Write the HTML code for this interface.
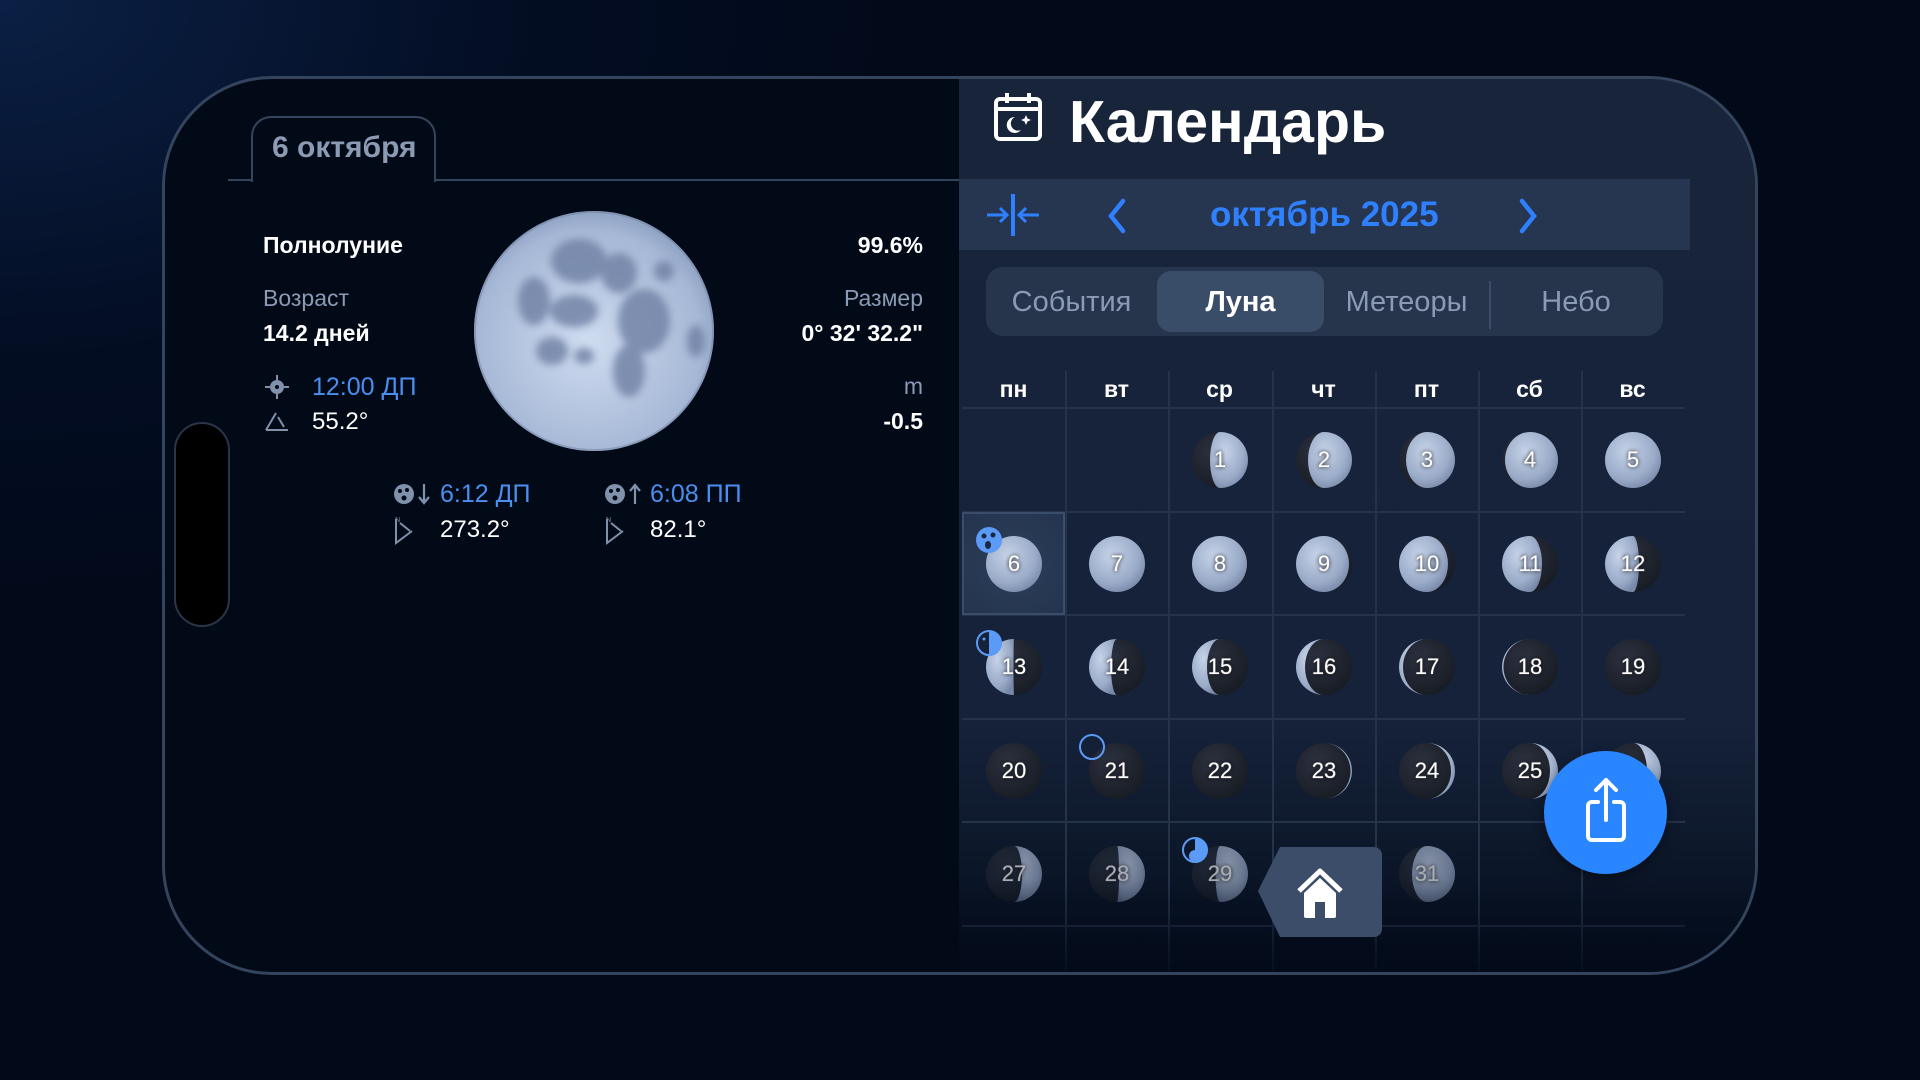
<!DOCTYPE html>
<html><head><meta charset="utf-8"><style>
*{margin:0;padding:0;box-sizing:border-box}
body{width:1920px;height:1080px;overflow:hidden;background:radial-gradient(ellipse 900px 600px at 0 0,#0b2045,#030d22 60%,#020a1a);font-family:"Liberation Sans",sans-serif;position:relative}
.a{position:absolute}
.phone{left:162px;top:76px;width:1596px;height:899px;border:3px solid #34445c;border-radius:110px;background:#020a18}
.rp{left:959px;top:79px;width:796px;height:893px;border-radius:0 107px 107px 0;background:linear-gradient(#18243a 0,#16223a 72%,#0d182b 86%,#040c1c 100%);overflow:hidden}
.t{position:absolute;white-space:nowrap}
.g{color:#8a9bb3}.w{color:#fff}.b{color:#4a8ff0}
.m{position:absolute;width:56px;height:56px}
.n{position:absolute;width:60px;text-align:center;color:#fff;font-size:22px;text-shadow:0 0 4px #000,0 0 1px #fff}
.wd{position:absolute;top:297px;width:103px;text-align:center;color:#fff;font-weight:bold;font-size:23px}
.vl{position:absolute;top:292px;width:2px;height:600px;background:#24324a}
.hl{position:absolute;left:3px;width:723px;height:2px;background:#24324a}
</style></head><body>
<svg width="0" height="0" style="position:absolute"><defs>
<radialGradient id="l" cx="40%" cy="35%" r="70%"><stop offset="0" stop-color="#c6d3e8"/><stop offset=".7" stop-color="#9aabc8"/><stop offset="1" stop-color="#7888a8"/></radialGradient>
<radialGradient id="d" cx="40%" cy="35%" r="70%"><stop offset="0" stop-color="#2c3240"/><stop offset="1" stop-color="#171b23"/></radialGradient>
<radialGradient id="big" cx="48%" cy="55%" r="62%"><stop offset="0" stop-color="#cfdcf0"/><stop offset=".75" stop-color="#a6b8d6"/><stop offset="1" stop-color="#7f91b2"/></radialGradient>
<filter id="bl"><feGaussianBlur stdDeviation="4"/></filter>
</defs></svg>

<div class="a phone"></div>
<div class="a" style="left:174px;top:422px;width:56px;height:205px;border-radius:28px;background:#000;border:2px solid #2a3548"></div>

<div class="a" style="left:228px;top:179px;width:731px;height:2px;background:#34445c"></div>
<div class="a" style="left:251px;top:116px;width:185px;height:66px;border:2px solid #34445c;border-bottom:none;border-radius:20px 20px 0 0;background:#020a18"></div>
<div class="t g" style="left:272px;top:131px;font-size:30px;font-weight:bold">6 октября</div>

<div class="t w" style="left:263px;top:232px;font-size:23px;font-weight:bold">Полнолуние</div>
<div class="t g" style="left:263px;top:285px;font-size:23px">Возраст</div>
<div class="t w" style="left:263px;top:320px;font-size:23px;font-weight:bold">14.2 дней</div>
<svg class="a" style="left:264px;top:374px" width="26" height="26" viewBox="0 0 26 26"><circle cx="13" cy="13" r="7" fill="#7f91ab"/><path d="M13 1v5M13 20v5M1 13h5M20 13h5" stroke="#7f91ab" stroke-width="2"/><circle cx="13" cy="13" r="2" fill="#020a18"/></svg>
<div class="t b" style="left:312px;top:373px;font-size:25px">12:00 ДП</div>
<svg class="a" style="left:264px;top:409px" width="26" height="24" viewBox="0 0 26 24"><path d="M2 21L12 4M2 21h22M14 8l6 10" stroke="#7f91ab" stroke-width="2" fill="none"/></svg>
<div class="t w" style="left:312px;top:408px;font-size:24px">55.2°</div>

<svg class="a" style="left:474px;top:211px" width="240" height="240" viewBox="0 0 240 240">
<defs><clipPath id="mc"><circle cx="120" cy="120" r="120"/></clipPath></defs>
<circle cx="120" cy="120" r="120" fill="url(#big)"/>
<g fill="#6e80a3" opacity=".8" filter="url(#bl)" clip-path="url(#mc)">
<ellipse cx="105" cy="50" rx="28" ry="22"/><ellipse cx="145" cy="62" rx="18" ry="20"/><ellipse cx="170" cy="110" rx="26" ry="32"/>
<ellipse cx="155" cy="160" rx="16" ry="26"/><ellipse cx="60" cy="90" rx="16" ry="24"/><ellipse cx="100" cy="100" rx="24" ry="16"/>
<ellipse cx="78" cy="140" rx="16" ry="14"/><ellipse cx="222" cy="130" rx="9" ry="16"/><ellipse cx="190" cy="60" rx="10" ry="10"/>
<ellipse cx="110" cy="145" rx="10" ry="8"/></g>
<circle cx="120" cy="120" r="119" fill="none" stroke="#6f80a0" stroke-width="2" opacity=".5"/>
</svg>

<div class="t w" style="right:997px;top:232px;font-size:23px;font-weight:bold">99.6%</div>
<div class="t g" style="right:997px;top:285px;font-size:23px">Размер</div>
<div class="t w" style="right:997px;top:320px;font-size:23px;font-weight:bold">0° 32' 32.2"</div>
<div class="t g" style="right:997px;top:373px;font-size:23px">m</div>
<div class="t w" style="right:997px;top:408px;font-size:23px;font-weight:bold">-0.5</div>

<svg class="a" style="left:393px;top:482px" width="40" height="24" viewBox="0 0 40 24"><circle cx="11" cy="12" r="10" fill="#7f91ab"/><circle cx="7" cy="9" r="2" fill="#020a18"/><circle cx="14" cy="8" r="2" fill="#020a18"/><circle cx="11" cy="16" r="2.5" fill="#020a18"/><path d="M31 2v18M26 15l5 6 5-6" stroke="#7f91ab" stroke-width="2.2" fill="none"/></svg>
<div class="t b" style="left:440px;top:480px;font-size:25px">6:12 ДП</div>
<svg class="a" style="left:393px;top:515px" width="26" height="30" viewBox="0 0 26 30"><path d="M3 4v24l16-12M7 8l10 8" stroke="#7f91ab" stroke-width="2" fill="none"/><text x="2" y="7" font-size="7" fill="#7f91ab">N</text></svg>
<div class="t w" style="left:440px;top:516px;font-size:24px">273.2°</div>

<svg class="a" style="left:604px;top:482px" width="40" height="24" viewBox="0 0 40 24"><circle cx="11" cy="12" r="10" fill="#7f91ab"/><circle cx="7" cy="9" r="2" fill="#020a18"/><circle cx="14" cy="8" r="2" fill="#020a18"/><circle cx="11" cy="16" r="2.5" fill="#020a18"/><path d="M31 22V4M26 9l5-6 5 6" stroke="#7f91ab" stroke-width="2.2" fill="none"/></svg>
<div class="t b" style="left:650px;top:480px;font-size:25px">6:08 ПП</div>
<svg class="a" style="left:604px;top:515px" width="26" height="30" viewBox="0 0 26 30"><path d="M3 4v24l16-12M7 8l10 8" stroke="#7f91ab" stroke-width="2" fill="none"/><text x="2" y="7" font-size="7" fill="#7f91ab">N</text></svg>
<div class="t w" style="left:650px;top:516px;font-size:24px">82.1°</div>

<div class="a rp">
<svg class="a" style="left:34px;top:12px" width="50" height="52" viewBox="0 0 50 52"><rect x="3" y="8" width="44" height="40" rx="4" fill="none" stroke="#fff" stroke-width="4"/><path d="M3 18h44M14 2v10M36 2v10" stroke="#fff" stroke-width="4"/><path d="M22 26a8 8 0 1 0 6 13 7 7 0 0 1-6-13z" fill="#fff"/><path d="M33 24l1.5 3.5 3.5 1.5-3.5 1.5-1.5 3.5-1.5-3.5-3.5-1.5 3.5-1.5z" fill="#fff"/></svg>
<div class="t w" style="left:110px;top:9px;font-size:59px;font-weight:bold">Календарь</div>

<div class="a" style="left:0;top:100px;width:731px;height:71px;background:#263650"></div>
<svg class="a" style="left:26px;top:113px" width="56" height="46" viewBox="0 0 56 46"><path d="M28 2v42" stroke="#2f80ff" stroke-width="4"/><path d="M2 23h20M15 16l7 7-7 7M54 23H34M41 16l-7 7 7 7" stroke="#2f80ff" stroke-width="3" fill="none"/></svg>
<svg class="a" style="left:146px;top:119px" width="24" height="36" viewBox="0 0 24 36"><path d="M18 3L6 18l12 15" stroke="#2f80ff" stroke-width="4.5" fill="none" stroke-linecap="round"/></svg>
<div class="t" style="left:251px;top:116px;width:200px;text-align:center;color:#2f80ff;font-size:35px;font-weight:bold">октябрь 2025</div>
<svg class="a" style="left:557px;top:119px" width="24" height="36" viewBox="0 0 24 36"><path d="M6 3l12 15-12 15" stroke="#2f80ff" stroke-width="4.5" fill="none" stroke-linecap="round"/></svg>

<div class="a" style="left:27px;top:188px;width:677px;height:69px;border-radius:17px;background:#26354c"></div>
<div class="a" style="left:198px;top:192px;width:167px;height:61px;border-radius:14px;background:#3a4d68"></div>
<div class="a" style="left:530px;top:202px;width:2px;height:48px;background:#3d4d66"></div>
<div class="t" style="left:27px;top:207px;width:171px;text-align:center;color:#8a9bb3;font-size:29px">События</div>
<div class="t w" style="left:198px;top:207px;width:167px;text-align:center;font-size:29px;font-weight:bold">Луна</div>
<div class="t" style="left:365px;top:207px;width:165px;text-align:center;color:#8a9bb3;font-size:29px">Метеоры</div>
<div class="t" style="left:532px;top:207px;width:170px;text-align:center;color:#8a9bb3;font-size:29px">Небо</div>

<div class="wd" style="left:3px">пн</div><div class="wd" style="left:106px">вт</div><div class="wd" style="left:209px">ср</div><div class="wd" style="left:313px">чт</div><div class="wd" style="left:416px">пт</div><div class="wd" style="left:519px">сб</div><div class="wd" style="left:622px">вс</div>
<div class="vl" style="left:106px"></div><div class="vl" style="left:209px"></div><div class="vl" style="left:313px"></div><div class="vl" style="left:416px"></div><div class="vl" style="left:519px"></div><div class="vl" style="left:622px"></div>
<div class="hl" style="top:328px"></div><div class="hl" style="top:432px"></div><div class="hl" style="top:535px"></div><div class="hl" style="top:639px"></div><div class="hl" style="top:742px"></div><div class="hl" style="top:846px"></div>

<div class="a" style="left:3px;top:433px;width:103px;height:103px;background:radial-gradient(circle at 50% 50%,#2c3e5a,#24344e);border:2px solid #3a4d6a"></div>

<svg class="m" style="left:233px;top:353px" viewBox="-28 -28 56 56"><circle r="28" fill="url(#d)"/><path d="M0-28A28 28 0 0 1 0 28A10 28 0 0 1 0-28" fill="url(#l)"/></svg><div class="n" style="left:231px;top:368px">1</div>
<svg class="m" style="left:337px;top:353px" viewBox="-28 -28 56 56"><circle r="28" fill="url(#d)"/><path d="M0-28A28 28 0 0 1 0 28A16 28 0 0 1 0-28" fill="url(#l)"/></svg><div class="n" style="left:335px;top:368px">2</div>
<svg class="m" style="left:440px;top:353px" viewBox="-28 -28 56 56"><circle r="28" fill="url(#d)"/><path d="M0-28A28 28 0 0 1 0 28A21 28 0 0 1 0-28" fill="url(#l)"/></svg><div class="n" style="left:438px;top:368px">3</div>
<svg class="m" style="left:543px;top:353px" viewBox="-28 -28 56 56"><circle r="28" fill="url(#d)"/><path d="M0-28A28 28 0 0 1 0 28A25 28 0 0 1 0-28" fill="url(#l)"/></svg><div class="n" style="left:541px;top:368px">4</div>
<svg class="m" style="left:646px;top:353px" viewBox="-28 -28 56 56"><circle r="28" fill="url(#l)"/></svg><div class="n" style="left:644px;top:368px">5</div>

<svg class="m" style="left:27px;top:457px" viewBox="-28 -28 56 56"><circle r="28" fill="url(#l)"/></svg><div class="n" style="left:25px;top:472px">6</div>
<svg class="m" style="left:130px;top:457px" viewBox="-28 -28 56 56"><circle r="28" fill="url(#l)"/></svg><div class="n" style="left:128px;top:472px">7</div>
<svg class="m" style="left:233px;top:457px" viewBox="-28 -28 56 56"><circle r="28" fill="url(#d)"/><path d="M0-28A28 28 0 0 0 0 28A27 28 0 0 0 0-28" fill="url(#l)"/></svg><div class="n" style="left:231px;top:472px">8</div>
<svg class="m" style="left:337px;top:457px" viewBox="-28 -28 56 56"><circle r="28" fill="url(#d)"/><path d="M0-28A28 28 0 0 0 0 28A25 28 0 0 0 0-28" fill="url(#l)"/></svg><div class="n" style="left:335px;top:472px">9</div>
<svg class="m" style="left:440px;top:457px" viewBox="-28 -28 56 56"><circle r="28" fill="url(#d)"/><path d="M0-28A28 28 0 0 0 0 28A21 28 0 0 0 0-28" fill="url(#l)"/></svg><div class="n" style="left:438px;top:472px">10</div>
<svg class="m" style="left:543px;top:457px" viewBox="-28 -28 56 56"><circle r="28" fill="url(#d)"/><path d="M0-28A28 28 0 0 0 0 28A12 28 0 0 0 0-28" fill="url(#l)"/></svg><div class="n" style="left:541px;top:472px">11</div>
<svg class="m" style="left:646px;top:457px" viewBox="-28 -28 56 56"><circle r="28" fill="url(#d)"/><path d="M0-28A28 28 0 0 0 0 28A6 28 0 0 0 0-28" fill="url(#l)"/></svg><div class="n" style="left:644px;top:472px">12</div>
<svg class="a" style="left:16px;top:447px" width="28" height="28" viewBox="0 0 28 28"><circle cx="14" cy="14" r="13" fill="#5b9bf5"/><circle cx="9" cy="10" r="2.5" fill="#1a2740"/><circle cx="18" cy="9" r="2.5" fill="#1a2740"/><ellipse cx="13" cy="19" rx="3" ry="4" fill="#1a2740"/></svg>

<svg class="m" style="left:27px;top:560px" viewBox="-28 -28 56 56"><circle r="28" fill="url(#d)"/><path d="M0-28A28 28 0 0 0 0 28A0.5 28 0 0 1 0-28" fill="url(#l)"/></svg><div class="n" style="left:25px;top:575px">13</div>
<svg class="m" style="left:130px;top:560px" viewBox="-28 -28 56 56"><circle r="28" fill="url(#d)"/><path d="M0-28A28 28 0 0 0 0 28A6 28 0 0 1 0-28" fill="url(#l)"/></svg><div class="n" style="left:128px;top:575px">14</div>
<svg class="m" style="left:233px;top:560px" viewBox="-28 -28 56 56"><circle r="28" fill="url(#d)"/><path d="M0-28A28 28 0 0 0 0 28A13 28 0 0 1 0-28" fill="url(#l)"/></svg><div class="n" style="left:231px;top:575px">15</div>
<svg class="m" style="left:337px;top:560px" viewBox="-28 -28 56 56"><circle r="28" fill="url(#d)"/><path d="M0-28A28 28 0 0 0 0 28A19 28 0 0 1 0-28" fill="url(#l)"/></svg><div class="n" style="left:335px;top:575px">16</div>
<svg class="m" style="left:440px;top:560px" viewBox="-28 -28 56 56"><circle r="28" fill="url(#d)"/><path d="M0-28A28 28 0 0 0 0 28A24 28 0 0 1 0-28" fill="url(#l)"/></svg><div class="n" style="left:438px;top:575px">17</div>
<svg class="m" style="left:543px;top:560px" viewBox="-28 -28 56 56"><circle r="28" fill="url(#d)"/><path d="M0-28A28 28 0 0 0 0 28A26.5 28 0 0 1 0-28" fill="url(#l)"/></svg><div class="n" style="left:541px;top:575px">18</div>
<svg class="m" style="left:646px;top:560px" viewBox="-28 -28 56 56"><circle r="28" fill="url(#d)"/></svg><div class="n" style="left:644px;top:575px">19</div>
<svg class="a" style="left:16px;top:550px" width="28" height="28" viewBox="0 0 28 28"><circle cx="14" cy="14" r="12" fill="none" stroke="#5b9bf5" stroke-width="2"/><path d="M14 2a12 12 0 0 1 0 24z" fill="#5b9bf5"/><circle cx="9" cy="10" r="1.5" fill="#5b9bf5"/></svg>

<svg class="m" style="left:27px;top:664px" viewBox="-28 -28 56 56"><circle r="28" fill="url(#d)"/></svg><div class="n" style="left:25px;top:679px">20</div>
<svg class="m" style="left:130px;top:664px" viewBox="-28 -28 56 56"><circle r="28" fill="url(#d)"/></svg><div class="n" style="left:128px;top:679px">21</div>
<svg class="m" style="left:233px;top:664px" viewBox="-28 -28 56 56"><circle r="28" fill="url(#d)"/></svg><div class="n" style="left:231px;top:679px">22</div>
<svg class="m" style="left:337px;top:664px" viewBox="-28 -28 56 56"><circle r="28" fill="url(#d)"/><path d="M0-28A28 28 0 0 1 0 28A26.5 28 0 0 0 0-28" fill="url(#l)"/></svg><div class="n" style="left:335px;top:679px">23</div>
<svg class="m" style="left:440px;top:664px" viewBox="-28 -28 56 56"><circle r="28" fill="url(#d)"/><path d="M0-28A28 28 0 0 1 0 28A24 28 0 0 0 0-28" fill="url(#l)"/></svg><div class="n" style="left:438px;top:679px">24</div>
<svg class="m" style="left:543px;top:664px" viewBox="-28 -28 56 56"><circle r="28" fill="url(#d)"/><path d="M0-28A28 28 0 0 1 0 28A20 28 0 0 0 0-28" fill="url(#l)"/></svg><div class="n" style="left:541px;top:679px">25</div>
<svg class="m" style="left:646px;top:664px" viewBox="-28 -28 56 56"><circle r="28" fill="url(#d)"/><path d="M0-28A28 28 0 0 1 0 28A14 28 0 0 0 0-28" fill="url(#l)"/></svg>
<svg class="a" style="left:119px;top:654px" width="28" height="28" viewBox="0 0 28 28"><circle cx="14" cy="14" r="12" fill="none" stroke="#5b9bf5" stroke-width="2"/></svg>

<div class="a" style="left:0;top:740px;width:731px;height:160px;opacity:.65">
<svg class="m" style="left:27px;top:27px" viewBox="-28 -28 56 56"><circle r="28" fill="url(#d)"/><path d="M0-28A28 28 0 0 1 0 28A8 28 0 0 0 0-28" fill="url(#l)"/></svg><div class="n" style="left:25px;top:42px">27</div>
<svg class="m" style="left:130px;top:27px" viewBox="-28 -28 56 56"><circle r="28" fill="url(#d)"/><path d="M0-28A28 28 0 0 1 0 28A2 28 0 0 0 0-28" fill="url(#l)"/></svg><div class="n" style="left:128px;top:42px">28</div>
<svg class="m" style="left:233px;top:27px" viewBox="-28 -28 56 56"><circle r="28" fill="url(#d)"/><path d="M0-28A28 28 0 0 1 0 28A4.5 28 0 0 1 0-28" fill="url(#l)"/></svg><div class="n" style="left:231px;top:42px">29</div>
<svg class="m" style="left:440px;top:27px" viewBox="-28 -28 56 56"><circle r="28" fill="url(#d)"/><path d="M0-28A28 28 0 0 1 0 28A15 28 0 0 1 0-28" fill="url(#l)"/></svg><div class="n" style="left:438px;top:42px">31</div>
</div>
<svg class="a" style="left:222px;top:757px" width="28" height="28" viewBox="0 0 28 28"><circle cx="14" cy="14" r="12" fill="none" stroke="#5b9bf5" stroke-width="2"/><path d="M14 2a12 12 0 0 1 0 24 6 6 0 0 1 0-12z" fill="#5b9bf5"/></svg>

<div class="a" style="left:0;top:800px;width:796px;height:93px;background:linear-gradient(rgba(4,12,28,0),rgba(3,11,26,.9))"></div>

<svg class="a" style="left:299px;top:768px" width="124" height="90" viewBox="0 0 124 90"><path d="M22 0h94a8 8 0 0 1 8 8v74a8 8 0 0 1-8 8H22L0 44z" fill="#3b4d68"/><path d="M41 44L62 24l21 20" stroke="#fff" stroke-width="5" fill="none" stroke-linejoin="round"/><path d="M46 46l16-15 16 15v23a2 2 0 0 1-2 2h-9V55h-10v16h-9a2 2 0 0 1-2-2z" fill="#fff"/></svg>
</div>

<div class="a" style="left:1544px;top:751px;width:123px;height:123px;border-radius:50%;background:#2a86ff;box-shadow:0 4px 12px rgba(0,0,0,.4)"></div>
<svg class="a" style="left:1576px;top:776px" width="60" height="70" viewBox="0 0 60 70"><path d="M30 44V4M20 14l10-10 10 10" stroke="#fff" stroke-width="4" fill="none" stroke-linecap="round" stroke-linejoin="round"/><path d="M22 26h-6a4 4 0 0 0-4 4v30a4 4 0 0 0 4 4h28a4 4 0 0 0 4-4V30a4 4 0 0 0-4-4h-6" stroke="#fff" stroke-width="4" fill="none" stroke-linecap="round"/></svg>
</body></html>
